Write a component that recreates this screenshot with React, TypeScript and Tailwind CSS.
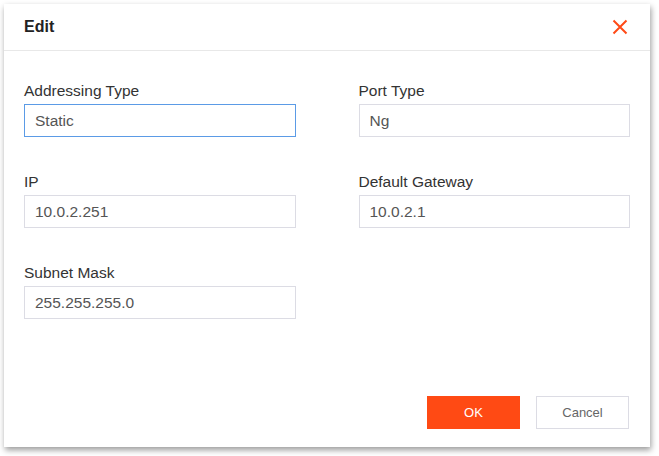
import React from 'react'

interface FieldProps {
  label: string
  value: string
  focused?: boolean
}

function Field({ label, value, focused }: FieldProps) {
  return (
    <div className="flex flex-col">
      <label className="text-[15.5px] leading-[20px] text-[#333]">{label}</label>
      <div
        className={`mt-[3px] h-[33px] flex items-center px-[10px] text-[15.5px] text-[#555] bg-white border ${
          focused ? 'border-[#5b9be6]' : 'border-[#dcdce4]'
        }`}
      >
        {value}
      </div>
    </div>
  )
}

export default function App() {
  return (
    <div className="w-[659px] h-[456px] bg-white pt-[4px] pl-[4px]" style={{ fontFamily: '"Liberation Sans", Arial, sans-serif' }}>
      <div className="w-[646px] h-[443px] bg-white flex flex-col shadow-[1px_3px_6px_rgba(0,0,0,0.4)]">
        <div className="h-[47px] flex items-center justify-between pl-[20px] pr-[22px] border-b border-[#e8e8e8]">
          <span className="text-[16px] font-bold text-[#222]">Edit</span>
          <button className="w-[16px] h-[16px] flex items-center justify-center">
            <svg width="16" height="16" viewBox="0 0 16 16">
              <path d="M1.5 1.5 L14.5 14.5 M14.5 1.5 L1.5 14.5" stroke="#ff4a17" strokeWidth="2" fill="none" />
            </svg>
          </button>
        </div>

        <div className="flex-1 px-[20px] pt-[30px] grid grid-cols-2 gap-x-[63px] gap-y-[35px] content-start">
          <Field label="Addressing Type" value="Static" focused />
          <Field label="Port Type" value="Ng" />
          <Field label="IP" value="10.0.2.251" />
          <Field label="Default Gateway" value="10.0.2.1" />
          <Field label="Subnet Mask" value="255.255.255.0" />
        </div>

        <div className="flex justify-end gap-[16px] pr-[21px] pb-[18px]">
          <button className="w-[93px] h-[33px] bg-[#ff4a14] text-white text-[13px]">OK</button>
          <button className="w-[93px] h-[33px] bg-white border border-[#dcdce4] text-[#666] text-[13px]">Cancel</button>
        </div>
      </div>
    </div>
  )
}
